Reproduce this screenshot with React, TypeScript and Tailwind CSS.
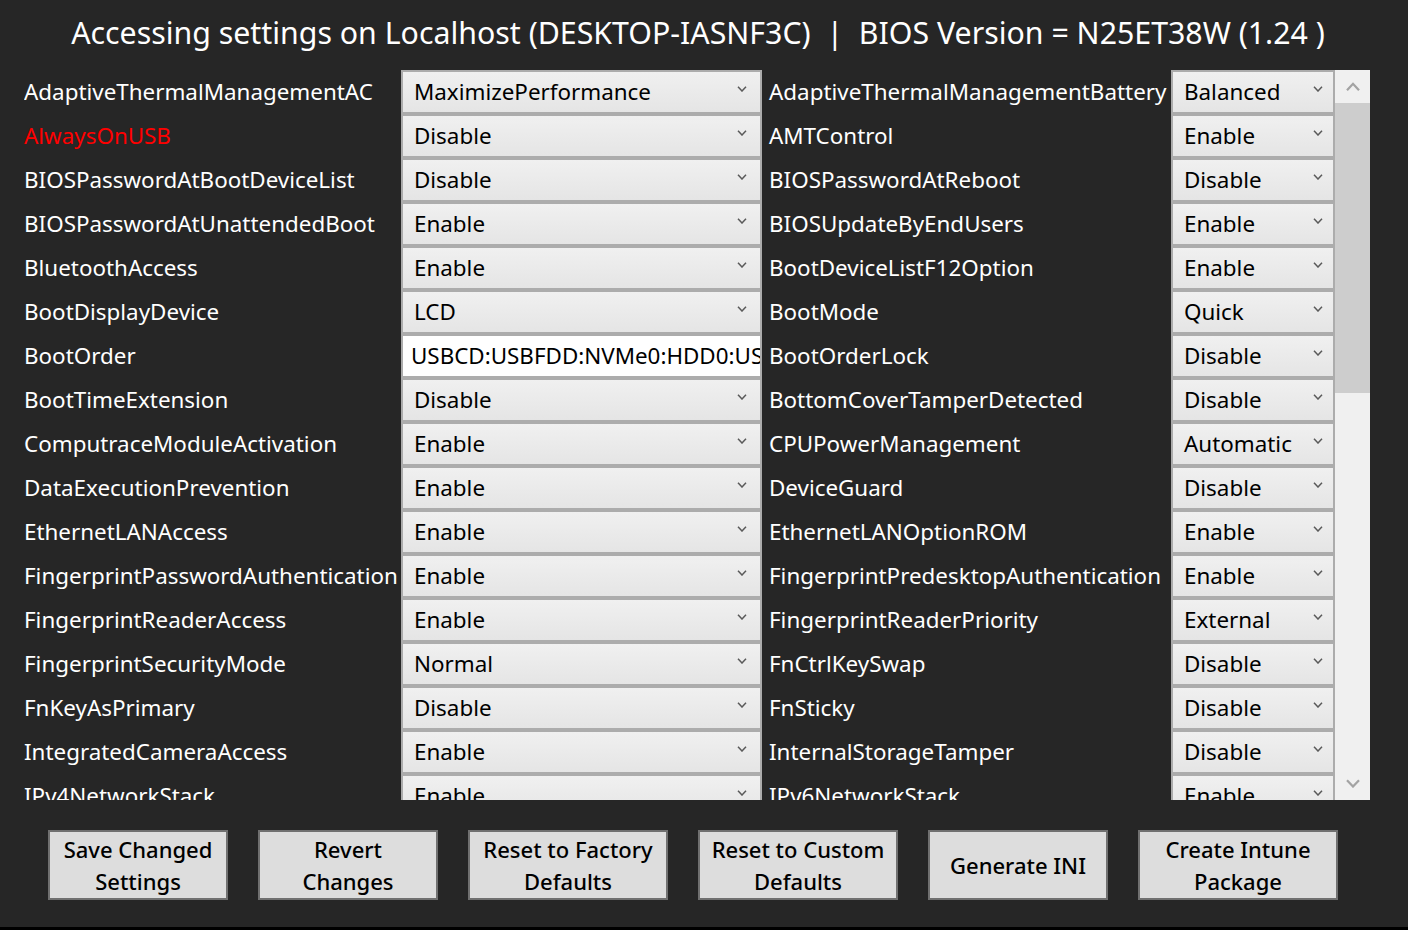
import React from 'react';

type Row = {
    left: string;
    leftValue: string;
    right: string;
    rightValue: string;
    leftIsText?: boolean;
    changed?: boolean;
};

const rows: Row[] = [
    { left: 'AdaptiveThermalManagementAC', leftValue: 'MaximizePerformance', right: 'AdaptiveThermalManagementBattery', rightValue: 'Balanced' },
    { left: 'AlwaysOnUSB', leftValue: 'Disable', right: 'AMTControl', rightValue: 'Enable', changed: true },
    { left: 'BIOSPasswordAtBootDeviceList', leftValue: 'Disable', right: 'BIOSPasswordAtReboot', rightValue: 'Disable' },
    { left: 'BIOSPasswordAtUnattendedBoot', leftValue: 'Enable', right: 'BIOSUpdateByEndUsers', rightValue: 'Enable' },
    { left: 'BluetoothAccess', leftValue: 'Enable', right: 'BootDeviceListF12Option', rightValue: 'Enable' },
    { left: 'BootDisplayDevice', leftValue: 'LCD', right: 'BootMode', rightValue: 'Quick' },
    { left: 'BootOrder', leftValue: 'USBCD:USBFDD:NVMe0:HDD0:USBHDD:PCILAN', right: 'BootOrderLock', rightValue: 'Disable', leftIsText: true },
    { left: 'BootTimeExtension', leftValue: 'Disable', right: 'BottomCoverTamperDetected', rightValue: 'Disable' },
    { left: 'ComputraceModuleActivation', leftValue: 'Enable', right: 'CPUPowerManagement', rightValue: 'Automatic' },
    { left: 'DataExecutionPrevention', leftValue: 'Enable', right: 'DeviceGuard', rightValue: 'Disable' },
    { left: 'EthernetLANAccess', leftValue: 'Enable', right: 'EthernetLANOptionROM', rightValue: 'Enable' },
    { left: 'FingerprintPasswordAuthentication', leftValue: 'Enable', right: 'FingerprintPredesktopAuthentication', rightValue: 'Enable' },
    { left: 'FingerprintReaderAccess', leftValue: 'Enable', right: 'FingerprintReaderPriority', rightValue: 'External' },
    { left: 'FingerprintSecurityMode', leftValue: 'Normal', right: 'FnCtrlKeySwap', rightValue: 'Disable' },
    { left: 'FnKeyAsPrimary', leftValue: 'Disable', right: 'FnSticky', rightValue: 'Disable' },
    { left: 'IntegratedCameraAccess', leftValue: 'Enable', right: 'InternalStorageTamper', rightValue: 'Disable' },
    { left: 'IPv4NetworkStack', leftValue: 'Enable', right: 'IPv6NetworkStack', rightValue: 'Enable' },
    { left: 'KeyboardIllumination', leftValue: 'Auto', right: 'LockBIOSSetting', rightValue: 'Disable' },
];

const buttons = [
    { label: 'Save Changed Settings', width: 'w-[180px]' },
    { label: 'Revert Changes', width: 'w-[180px]' },
    { label: 'Reset to Factory Defaults', width: 'w-[200px]' },
    { label: 'Reset to Custom Defaults', width: 'w-[200px]' },
    { label: 'Generate INI', width: 'w-[180px]' },
    { label: 'Create Intune Package', width: 'w-[200px]' },
];

const Chevron: React.FC<{ className?: string; up?: boolean }> = ({ className, up }) => (
    <svg viewBox="0 0 10 6" className={className} fill="none" stroke="currentColor" strokeWidth="1.5">
        {up ? <path d="M1 5.5 L5 1.2 L9 5.5" /> : <path d="M1 0.8 L5 5 L9 0.8" />}
    </svg>
);

const Combo: React.FC<{ value: string; chevronClass: string }> = ({ value, chevronClass }) => (
    <div className="h-[44px] flex items-center border-2 border-[#acacac] bg-gradient-to-b from-[#f0f0f0] to-[#e5e5e5] relative">
        <span className="pl-[11px] pb-[1px] text-black whitespace-nowrap">{value}</span>
        <Chevron className={`absolute w-[10px] h-[6px] text-[#5a5a5a] ${chevronClass}`} />
    </div>
);

export default function App() {
    return (
        <div className="h-[930px] w-full bg-[#262626] flex flex-col font-['Segoe_UI','Noto_Sans',sans-serif] border-b-[3px] border-black">
            <div className="h-[70px] flex items-center justify-center text-white text-[30.3px] pb-[5px] pr-[12px] whitespace-pre">
                Accessing settings on Localhost (DESKTOP-IASNF3C)  |  BIOS Version = N25ET38W (1.24 )
            </div>

            <div className="h-[730px] ml-[24px] w-[1346px] flex">
                <div className="w-[1311px] overflow-hidden text-[22.4px]">
                    {rows.map((r) => (
                        <div key={r.left} className="flex h-[44px]">
                            <div className={`w-[377px] flex items-center pb-[1px] whitespace-nowrap overflow-hidden ${r.changed ? 'text-[#ff0000]' : 'text-white'}`}>
                                {r.left}
                            </div>
                            <div className="w-[361px]">
                                {r.leftIsText ? (
                                    <div className="h-[44px] flex items-center border-2 border-[#acacac] bg-white overflow-hidden">
                                        <span className="pl-[8px] pb-[1px] text-black whitespace-nowrap">{r.leftValue}</span>
                                    </div>
                                ) : (
                                    <Combo value={r.leftValue} chevronClass="right-[13px] top-[14px]" />
                                )}
                            </div>
                            <div className="w-[409px] pl-[7px] flex items-center pb-[1px] text-white whitespace-nowrap overflow-hidden">
                                {r.right}
                            </div>
                            <div className="w-[164px]">
                                <Combo value={r.rightValue} chevronClass="right-[10px] top-[14px]" />
                            </div>
                        </div>
                    ))}
                </div>
                <div className="w-[35px] flex flex-col bg-[#f0f0f0]">
                    <div className="h-[33px] flex items-center justify-center">
                        <Chevron up className="w-[16px] h-[9px] text-[#a3a3a3]" />
                    </div>
                    <div className="h-[290px] bg-[#cdcdcd]" />
                    <div className="flex-1" />
                    <div className="h-[33px] flex items-center justify-center">
                        <Chevron className="w-[16px] h-[9px] text-[#a3a3a3]" />
                    </div>
                </div>
            </div>

            <div className="flex ml-[48px] mt-[30px] gap-[30px]">
                {buttons.map((b) => (
                    <div
                        key={b.label}
                        className={`${b.width} h-[70px] bg-[#dddddd] border-2 border-[#707070] flex items-center justify-center text-center text-black text-[22px] font-medium leading-[32px] px-[8px]`}
                    >
                        {b.label}
                    </div>
                ))}
            </div>
        </div>
    );
}
